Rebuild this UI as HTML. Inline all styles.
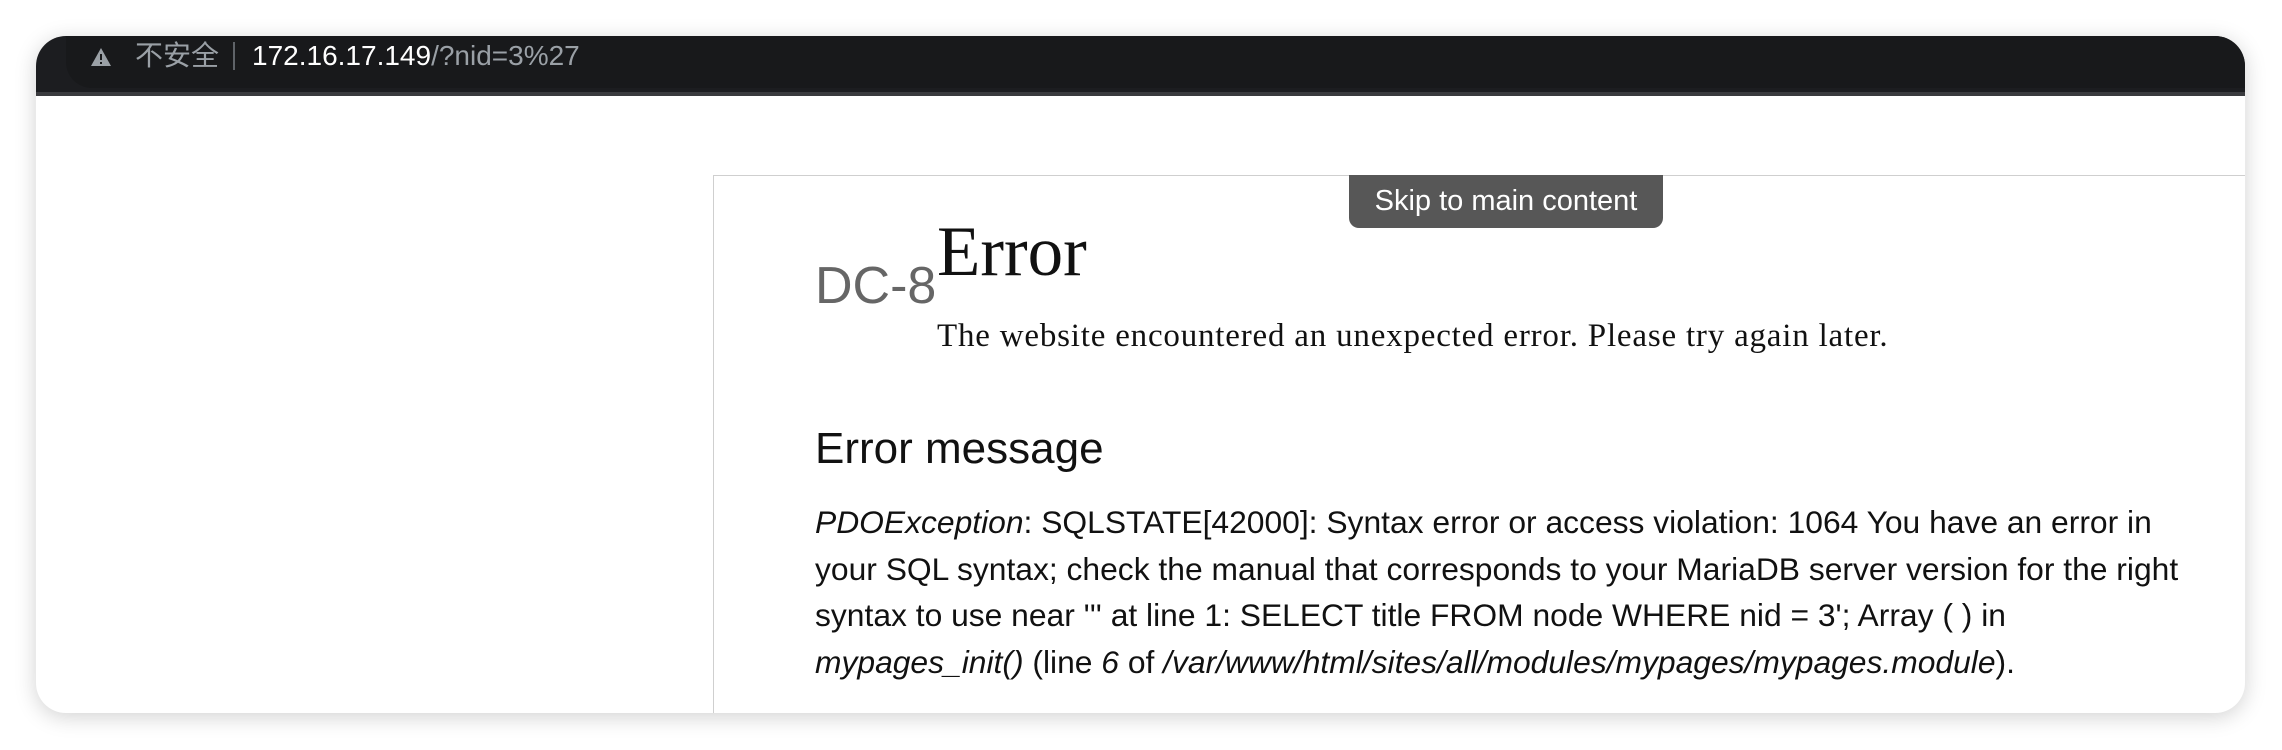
<!DOCTYPE html>
<html><head><meta charset="utf-8"><style>
*{margin:0;padding:0;box-sizing:border-box}
body{width:2282px;height:750px;background:#fff;position:relative;overflow:hidden;font-family:"Liberation Sans",Arial,sans-serif}
.win{position:absolute;left:36px;top:36px;width:2209px;height:677px;border-radius:30px;background:#fff;box-shadow:0 4px 22px rgba(0,0,0,.18);overflow:hidden}
.bar{position:absolute;left:0;top:0;right:0;height:60px;background:#1c1d20;border-bottom:4px solid #3a3b3e}
.pill{position:absolute;left:30px;top:0;right:0;height:52px;background:#18191b;border-radius:0 0 0 26px}
.t{position:absolute;top:5px;height:30px;line-height:30px;font-size:28px;color:#9aa0a6;white-space:nowrap}
.content{position:absolute;left:677px;top:139px;right:-2px;bottom:-2px;border:1.5px solid #cfcfcf}
.skip{position:absolute;left:1313px;top:139px;width:314px;height:53px;background:#575757;color:#fff;font-size:29px;text-align:center;line-height:52px;border-radius:0 0 10px 10px}
.a{position:absolute;white-space:nowrap}
.ser{font-family:"Liberation Serif",Georgia,serif;color:#111}
p.err{position:absolute;left:779px;top:463px;font-size:31.8px;line-height:46.5px;color:#111;white-space:nowrap}
</style></head><body>
<div class="win">
<div class="bar"><div class="pill"></div>
<svg style="position:absolute;left:54px;top:11px" width="22" height="20" viewBox="0 0 22 20"><path d="M11 1 L21 19 L1 19 Z" fill="#9aa0a6"/><rect x="10" y="7" width="2" height="6" fill="#18191b"/><rect x="10" y="15" width="2" height="2" fill="#18191b"/></svg>
<div class="t" style="left:99px;font-family:'Liberation Sans','Noto Sans CJK SC',sans-serif">不安全</div>
<div style="position:absolute;left:197px;top:6px;width:2px;height:28px;background:#5f6368"></div>
<div class="t" style="left:216px"><span style="color:#fff">172.16.17.149</span>/?nid=3%27</div>
</div>
<div class="content"></div>
<div class="skip">Skip to main content</div>
<div class="a" style="left:779px;top:220px;font-size:52px;color:#666">DC-8</div>
<div class="a ser" style="left:901px;top:176px;font-size:71px">Error</div>
<div class="a ser" style="left:901px;top:282px;font-size:33px;letter-spacing:0.8px">The website encountered an unexpected error. Please try again later.</div>
<div class="a" style="left:779px;top:388px;font-size:44px;color:#111">Error message</div>
<p class="err"><i>PDOException</i>: SQLSTATE[42000]: Syntax error or access violation: 1064 You have an error in<br>your SQL syntax; check the manual that corresponds to your MariaDB server version for the right<br>syntax to use near ''' at line 1: SELECT title FROM node WHERE nid = 3'; Array ( ) in<br><i>mypages_init()</i> (line <i>6</i> of <i>/var/www/html/sites/all/modules/mypages/mypages.module</i>).</p>
</div>
</body></html>
